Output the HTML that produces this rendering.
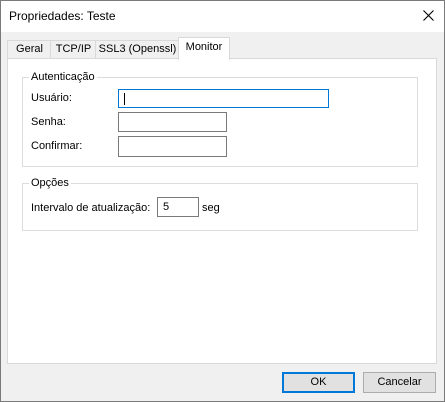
<!DOCTYPE html><html><head><style>
body{margin:0;width:445px;height:402px;overflow:hidden;font-family:"Liberation Sans",sans-serif;font-size:11px;color:#000}
.win{position:absolute;left:0;top:0;width:445px;height:402px;background:#f0f0f0}
.bd{position:absolute;left:0;top:0;width:443px;height:400px;border:1px solid #7a7a7a;z-index:5}
.tb{position:absolute;left:0;top:0;width:445px;height:32px;background:#fff}
.a{position:absolute;white-space:nowrap}
.tab{position:absolute;top:41px;height:18px;background:#f0f0f0;border:1px solid #d9d9d9;border-bottom:none;line-height:17px;text-align:center;white-space:nowrap}
.panel{position:absolute;left:7px;top:58px;width:428px;height:304px;background:#fff;border:1px solid #d9d9d9}
.grp{position:absolute;border:1px solid #dcdcdc}
.gl{position:absolute;background:#fff;padding:0 2px;top:-8px;left:6px;line-height:14px;white-space:nowrap}
.in{position:absolute;border:1px solid #7a7a7a;background:#fff;box-sizing:border-box}
.btn{position:absolute;top:372px;width:73px;height:21px;box-sizing:border-box;background:#e1e1e1;border:1px solid #adadad;text-align:center;line-height:19px}
</style></head><body><div class="win">
<div class="tb"></div><div class="bd"></div>
<div class="a" style="left:9px;top:9px;font-size:12px">Propriedades: Teste</div>
<svg class="a" style="left:423px;top:10px" width="11" height="11"><path d="M0.5 0.5L10.5 10.5M10.5 0.5L0.5 10.5" stroke="#000" stroke-width="1.1"/></svg>
<div class="tab" style="left:7px;top:40px;width:43px">Geral</div>
<div class="tab" style="left:50px;top:40px;width:45px">TCP/IP</div>
<div class="tab" style="left:95px;top:40px;width:83px">SSL3 (Openssl)</div>
<div class="panel">
<div class="grp" style="left:14px;top:18px;width:394px;height:88px"><div class="gl">Autenticação</div></div>
<div class="a" style="left:23px;top:33px">Usuário:</div>
<div class="a" style="left:23px;top:57px">Senha:</div>
<div class="a" style="left:23px;top:81px">Confirmar:</div>
<div class="in" style="left:110px;top:30px;width:211px;height:19px;border-color:#0078d7"><div class="a" style="left:5px;top:3px;width:1px;height:12px;background:#000"></div></div>
<div class="in" style="left:110px;top:53px;width:109px;height:20px"></div>
<div class="in" style="left:110px;top:77px;width:109px;height:21px"></div>
<div class="grp" style="left:14px;top:124px;width:394px;height:46px"><div class="gl">Opções</div></div>
<div class="a" style="left:23px;top:143px">Intervalo de atualização:</div>
<div class="in" style="left:149px;top:138px;width:42px;height:20px"><div class="a" style="left:5px;top:3px">5</div></div>
<div class="a" style="left:194px;top:143px">seg</div>
</div>
<div class="tab" style="left:178px;top:37px;width:50px;height:22px;background:#fff;line-height:19px;z-index:2">Monitor</div>
<div class="btn" style="left:282px;border:2px solid #0078d7;line-height:17px">OK</div>
<div class="btn" style="left:363px">Cancelar</div>
</div></body></html>
